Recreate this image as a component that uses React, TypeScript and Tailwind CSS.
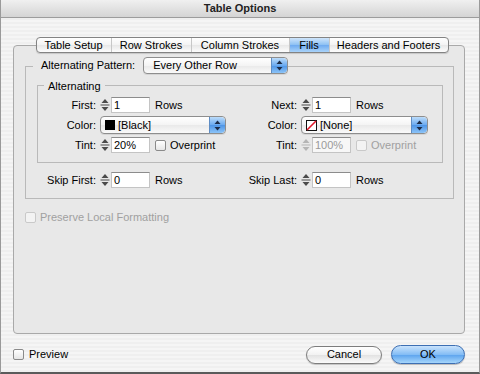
import React from 'react';

const font = 'font-["Liberation_Sans",Arial,sans-serif]';

function Stepper({ disabled }: { disabled?: boolean }) {
  const c = disabled ? '#b5b5b5' : '#4a4a4a';
  return (
    <svg width="10" height="16" viewBox="0 0 10 16" className="shrink-0">
      <polygon points="1.5,6 5,2 8.5,6" fill={c} />
      <line x1="0.5" y1="8" x2="9.5" y2="8" stroke={c} strokeWidth="1" />
      <polygon points="1.5,10 5,14 8.5,10" fill={c} />
    </svg>
  );
}

function NumField({ value, disabled }: { value: string; disabled?: boolean }) {
  return (
    <div className="flex items-center gap-[1px]">
      <Stepper disabled={disabled} />
      <div
        className={`w-[39px] h-[16px] flex items-center pl-[2px] border border-[#c4c4c4] border-t-[#8c8c8c] ${
          disabled ? 'bg-[#f7f7f7] text-[#9a9a9a]' : 'bg-white text-black'
        }`}
      >
        {value}
      </div>
    </div>
  );
}

function Arrows() {
  return (
    <div className="w-[16px] h-full flex items-center justify-center rounded-r-[4px] bg-[linear-gradient(#bcdcfa,#6aaaf0_50%,#4d94e6_51%,#8cc4f8)] border-l border-[#5f8dc4]">
      <svg width="7" height="11" viewBox="0 0 7 11">
        <polygon points="0.5,4 3.5,0.5 6.5,4" fill="#1c2c48" />
        <polygon points="0.5,7 3.5,10.5 6.5,7" fill="#1c2c48" />
      </svg>
    </div>
  );
}

function Popup({ width, height, children }: { width: string; height: string; children: React.ReactNode }) {
  return (
    <div
      className={`${width} ${height} flex items-stretch rounded-[4px] border border-[#8e8e8e] bg-[linear-gradient(#ffffff,#f4f4f4_50%,#e9e9e9_51%,#fafafa)] shadow-[0_1px_0_rgba(0,0,0,0.08)] overflow-hidden`}
    >
      <div className="flex-1 flex items-center gap-[3px] pl-[4px]">{children}</div>
      <Arrows />
    </div>
  );
}

function Check({ disabled }: { disabled?: boolean }) {
  return (
    <div
      className={`w-[11px] h-[11px] rounded-[2px] border shrink-0 ${
        disabled
          ? 'border-[#c9c9c9] bg-[#f3f3f3]'
          : 'border-[#8a8a8a] bg-[linear-gradient(#ffffff,#e6e6e6)]'
      }`}
    />
  );
}

const tabs = [
  { label: 'Table Setup', w: 'w-[74px]' },
  { label: 'Row Strokes', w: 'w-[80px]' },
  { label: 'Column Strokes', w: 'w-[98px]' },
  { label: 'Fills', w: 'w-[40px]', active: true },
  { label: 'Headers and Footers', w: 'w-[119px]' },
];

function Label({ w, children }: { w: string; children: React.ReactNode }) {
  return <div className={`${w} shrink-0 text-right pr-[4px]`}>{children}</div>;
}

export default function App() {
  return (
    <div
      className={`${font} text-[11px] text-black w-[480px] h-[374px] flex flex-col border-l border-r border-b-2 border-[#9a9a9a] border-b-[#5a5a5a] bg-[repeating-linear-gradient(0deg,#efefef_0px,#efefef_2px,#f5f5f5_2px,#f5f5f5_4px)] overflow-hidden`}
    >
      {/* title bar */}
      <div className="h-[18px] shrink-0 flex items-center justify-center font-bold text-[11px] border-b border-[#9c9c9c] bg-[linear-gradient(#f0f0f0,#d4d4d4)] text-[#222]">
        Table Options
      </div>

      <div className="pl-[12px] pr-[14px] flex flex-col">
        {/* tabs */}
        <div className="mt-[19px] flex justify-center relative z-10 pl-[6px]">
          <div className="flex h-[16px] rounded-[4px] border border-[#838383] bg-[linear-gradient(#ffffff,#f3f3f3_50%,#e7e7e7_51%,#fdfdfd)] overflow-hidden shadow-[0_1px_1px_rgba(0,0,0,0.15)]">
            {tabs.map((t, i) => (
              <div
                key={t.label}
                className={`${t.w} flex items-center justify-center ${i > 0 ? 'border-l border-[#c7c7c7]' : ''} ${
                  t.active ? 'bg-[linear-gradient(#cfe5fb,#8cc0f3_50%,#6eaaf0_51%,#a9d3fa)] border-[#7fa6d6]' : ''
                }`}
              >
                {t.label}
              </div>
            ))}
          </div>
        </div>

        {/* panel */}
        <div className="-mt-[8px] h-[289px] rounded-[4px] border border-[#a9a9a9] bg-[#e8e8e8] flex flex-col">
          {/* outer group */}
          <div className="mt-[20px] ml-[11px] w-[429px] h-[133px] border border-[#b9b9b9] flex flex-col">
            <div className="-mt-[10px] h-[17px] flex items-center">
              <div className="ml-[7px] px-[8px] bg-[#e8e8e8] h-full flex items-center">Alternating Pattern:</div>
              <Popup width="w-[145px]" height="h-[17px]">
                <span className="pl-[5px]">Every Other Row</span>
              </Popup>
            </div>

            {/* inner group */}
            <div className="mt-[11px] ml-[11px] w-[406px] h-[78px] border border-[#b9b9b9] flex flex-col">
              <div className="-mt-[7px] h-[14px] flex items-center">
                <div className="ml-[6px] px-[4px] bg-[#e8e8e8]">Alternating</div>
              </div>
              <div className="mt-[2px] h-[20px] flex items-center">
                <div className="w-[209px] shrink-0 flex items-center">
                  <Label w="w-[62px]">First:</Label>
                  <NumField value="1" />
                  <span className="ml-[5px]">Rows</span>
                </div>
                <Label w="w-[54px]">Next:</Label>
                <NumField value="1" />
                <span className="ml-[5px]">Rows</span>
              </div>
              <div className="h-[20px] flex items-center">
                <div className="w-[209px] shrink-0 flex items-center">
                  <Label w="w-[62px]">Color:</Label>
                  <Popup width="w-[126px]" height="h-[18px]">
                    <div className="w-[10px] h-[10px] bg-black" />
                    <span>[Black]</span>
                  </Popup>
                </div>
                <Label w="w-[54px]">Color:</Label>
                <Popup width="w-[127px]" height="h-[18px]">
                  <svg width="11" height="11" viewBox="0 0 11 11">
                    <rect x="0.5" y="0.5" width="10" height="10" fill="#fff" stroke="#111" />
                    <line x1="1" y1="10" x2="10" y2="1" stroke="#e0182a" strokeWidth="1.6" />
                  </svg>
                  <span>[None]</span>
                </Popup>
              </div>
              <div className="h-[20px] flex items-center">
                <div className="w-[209px] shrink-0 flex items-center">
                  <Label w="w-[62px]">Tint:</Label>
                  <NumField value="20%" />
                  <div className="ml-[5px] flex items-center gap-[4px]">
                    <Check />
                    <span>Overprint</span>
                  </div>
                </div>
                <Label w="w-[54px]">Tint:</Label>
                <NumField value="100%" disabled />
                <div className="ml-[5px] flex items-center gap-[4px] text-[#a0a0a0]">
                  <Check disabled />
                  <span>Overprint</span>
                </div>
              </div>
            </div>

            <div className="mt-[7px] h-[20px] flex items-center">
              <div className="w-[221px] shrink-0 flex items-center">
                <Label w="w-[74px]">Skip First:</Label>
                <NumField value="0" />
                <span className="ml-[5px]">Rows</span>
              </div>
              <Label w="w-[54px]">Skip Last:</Label>
              <NumField value="0" />
              <span className="ml-[5px]">Rows</span>
            </div>
          </div>

          <div className="mt-[10px] ml-[11px] flex items-center gap-[4px] text-[#a0a0a0]">
            <Check disabled />
            <span>Preserve Local Formatting</span>
          </div>
        </div>

        {/* bottom */}
        <div className="mt-[11px] h-[19px] flex items-center">
          <div className="flex items-center gap-[5px]">
            <Check />
            <span>Preview</span>
          </div>
          <div className="ml-auto flex items-center gap-[9px]">
            <div className="w-[76px] h-[18px] rounded-full border border-[#7d7d7d] flex items-center justify-center bg-[linear-gradient(#ffffff,#f2f2f2_50%,#e2e2e2_51%,#fbfbfb)] shadow-[0_1px_1px_rgba(0,0,0,0.2)]">
              Cancel
            </div>
            <div className="w-[74px] h-[19px] rounded-full border border-[#3d6fb3] flex items-center justify-center bg-[linear-gradient(#c9e3fc,#84bdf5_50%,#5aa2ee_51%,#a6d6fb)] shadow-[0_1px_1px_rgba(0,0,0,0.25)]">
              OK
            </div>
          </div>
        </div>
      </div>
    </div>
  );
}
